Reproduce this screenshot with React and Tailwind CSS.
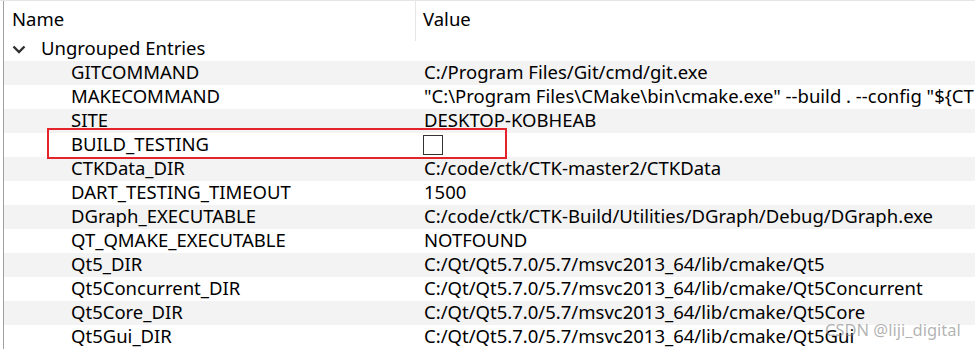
import React from "react";

const rows = [
  ["GITCOMMAND", "C:/Program Files/Git/cmd/git.exe"],
  ["MAKECOMMAND", '"C:\\Program Files\\CMake\\bin\\cmake.exe" --build . --config "${CT'],
  ["SITE", "DESKTOP-KOBHEAB"],
  ["BUILD_TESTING", null],
  ["CTKData_DIR", "C:/code/ctk/CTK-master2/CTKData"],
  ["DART_TESTING_TIMEOUT", "1500"],
  ["DGraph_EXECUTABLE", "C:/code/ctk/CTK-Build/Utilities/DGraph/Debug/DGraph.exe"],
  ["QT_QMAKE_EXECUTABLE", "NOTFOUND"],
  ["Qt5_DIR", "C:/Qt/Qt5.7.0/5.7/msvc2013_64/lib/cmake/Qt5"],
  ["Qt5Concurrent_DIR", "C:/Qt/Qt5.7.0/5.7/msvc2013_64/lib/cmake/Qt5Concurrent"],
  ["Qt5Core_DIR", "C:/Qt/Qt5.7.0/5.7/msvc2013_64/lib/cmake/Qt5Core"],
  ["Qt5Gui_DIR", "C:/Qt/Qt5.7.0/5.7/msvc2013_64/lib/cmake/Qt5Gui"],
];

export default function App() {
  return (
    <div
      className="relative w-[975px] h-[349px] overflow-hidden bg-white text-black text-[18.5px]"
      style={{ fontFamily: '"Noto Sans", "Noto Sans CJK SC", sans-serif' }}
    >
      <div className="h-full pl-[3px] border-t border-[#e6e6e6]">
        <div className="h-full border-l border-[#a0a0a0] flex flex-col">
          {/* header */}
          <div className="flex h-[36px] shrink-0">
            <div className="w-[412px] shrink-0 pl-[8px] pt-[7px] leading-[22px] border-r border-[#e6e6e6] h-[40px]">
              Name
            </div>
            <div className="pl-[7px] pt-[7px] leading-[22px]">Value</div>
          </div>
          {/* group */}
          <div className="flex items-start h-[24px] shrink-0 leading-[22px] pb-[2px]">
            <div className="w-[37px] shrink-0 pl-[8px] pt-[8px] flex">
              <svg width="14" height="9" viewBox="0 0 14 9" fill="none">
                <path d="M1.5 1.5 L7 7 L12.5 1.5" stroke="#303030" strokeWidth="2.4" />
              </svg>
            </div>
            <div>Ungrouped Entries</div>
          </div>
          {rows.map(([name, value], i) => (
            <div
              key={name}
              className={
                "flex h-[24px] shrink-0 leading-[22px] whitespace-nowrap " +
                (i % 2 === 0 ? "bg-[#f3f3f3]" : "bg-white")
              }
            >
              <div className="w-[412px] shrink-0 pl-[67px] pb-[2px]">{name}</div>
              <div className="flex-1 pl-[8px] pb-[2px] flex items-center">
                {value === null ? (
                  <div className="ml-[-1px] mb-[-2px] w-[20px] h-[20px] border border-[#333] bg-white" />
                ) : (
                  value
                )}
              </div>
            </div>
          ))}
        </div>
      </div>
      {/* red annotation box */}
      <div className="absolute left-[47px] top-[128px] w-[460px] h-[31px] border-2 border-[#e5232b]" />
      {/* watermark */}
      <div
        className="absolute left-[825px] top-[320px] text-[16.5px] leading-[20px] text-[rgba(128,128,128,0.6)] whitespace-nowrap"
        style={{ fontFamily: '"Noto Sans", sans-serif' }}
      >
        CSDN @liji_digital
      </div>
    </div>
  );
}
